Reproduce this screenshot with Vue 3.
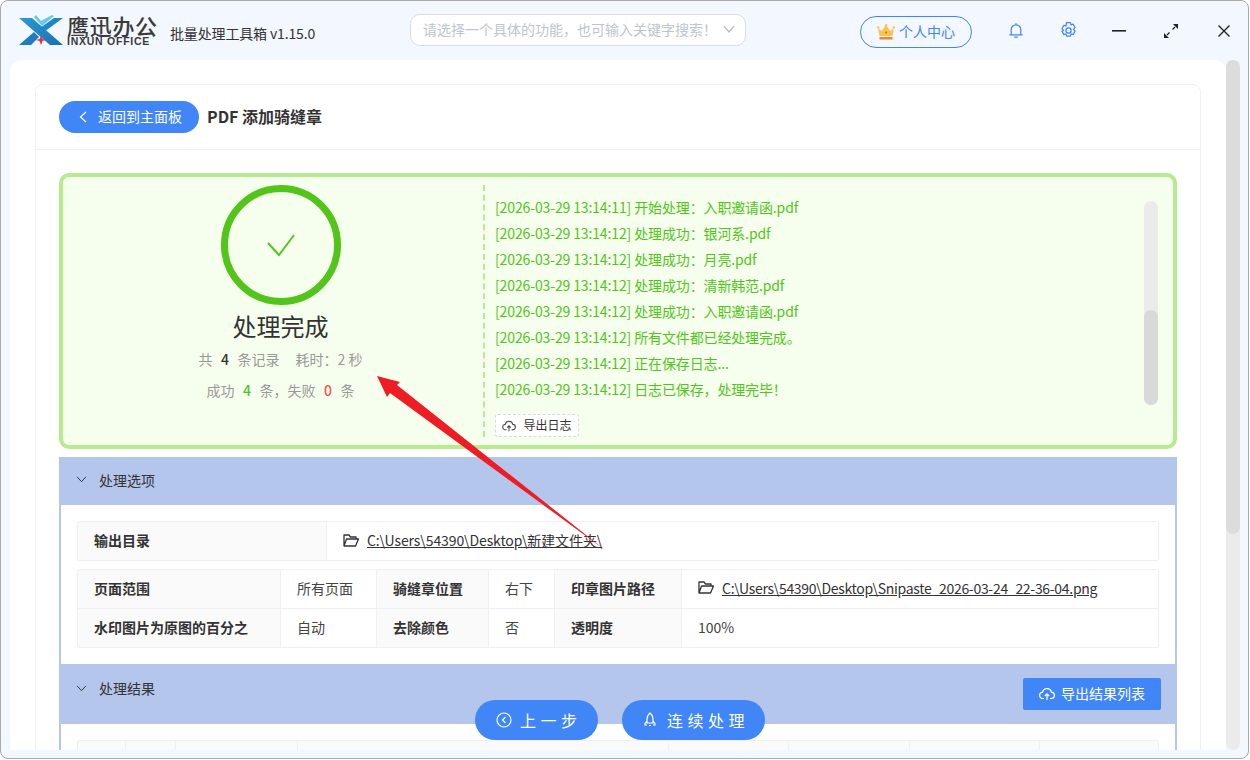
<script setup>
const logs = [
  '[2026-03-29 13:14:11] 开始处理：入职邀请函.pdf',
  '[2026-03-29 13:14:12] 处理成功：银河系.pdf',
  '[2026-03-29 13:14:12] 处理成功：月亮.pdf',
  '[2026-03-29 13:14:12] 处理成功：清新韩范.pdf',
  '[2026-03-29 13:14:12] 处理成功：入职邀请函.pdf',
  '[2026-03-29 13:14:12] 所有文件都已经处理完成。',
  '[2026-03-29 13:14:12] 正在保存日志...',
  '[2026-03-29 13:14:12] 日志已保存，处理完毕！'
]
</script>

<template>
  <div class="window">
    <header class="topbar">
      <div class="logo">
        <svg class="logo-mark" viewBox="0 0 46 33" width="46" height="33">
          <defs>
            <linearGradient id="lg1" x1="0" y1="0" x2="1" y2="1">
              <stop offset="0" stop-color="#2a9ad6" />
              <stop offset="1" stop-color="#1a6fae" />
            </linearGradient>
          </defs>
          <polygon points="1,4 14,4 45,31 32,31" fill="url(#lg1)" />
          <polygon points="45,4 36,4 22,14 26,18" fill="#1f86c6" />
          <polygon points="1,31 13,31 21,23 16,18" fill="#1f7dbd" />
          <polygon points="18,1 23,7 34,1 36,2 24,12 16,3" fill="#63c9ee" />
          <polygon points="23,22 24.500,25 28,26 24.500,27 23,31 21.500,27 18,26 21.500,25" fill="#e8303a" />
        </svg>
        <div class="logo-words">
          <span class="logo-cn">鹰迅办公</span>
          <span class="logo-en">INXUN OFFICE</span>
        </div>
      </div>
      <div class="app-name">批量处理工具箱 v1.15.0</div>
      <div class="search">
        <span>请选择一个具体的功能，也可输入关键字搜索！</span>
        <svg viewBox="0 0 12 8" width="12" height="8"><path d="M1 1l5 6 5-6" fill="none" stroke="#bbb" stroke-width="1.2" /></svg>
      </div>
      <div class="user">
        <svg viewBox="0 0 18 16" width="18" height="16">
          <path d="M1 4l3.5 3L9 1l4.5 6L17 4l-1.5 8h-13z" fill="#fcc252" />
          <circle cx="1.2" cy="3.4" r="1.2" fill="#fcc252" /><circle cx="9" cy="1.2" r="1.2" fill="#fcc252" /><circle cx="16.8" cy="3.4" r="1.2" fill="#fcc252" />
          <rect x="2.5" y="13" width="13" height="2.5" fill="#f5812a" />
          <circle cx="9" cy="8.5" r="1" fill="#e8503a" />
        </svg>
        <span>个人中心</span>
      </div>
      <svg class="tool bell" viewBox="0 0 16 18" width="14" height="17" fill="none" stroke="#4086f7" stroke-width="1.4">
        <path d="M2.5 14V8a5.5 5.5 0 0 1 11 0v6zM1 14h14M6.5 16.5h3M8 1v1.5" stroke-linecap="round" />
      </svg>
      <svg class="tool gear" viewBox="1.500 0.500 13 15" width="15" height="17" fill="none" stroke="#4086f7" stroke-width="1.100">
        <path d="M6.300 1h3.400l.5 2 1.900-.6 1.700 3-1.400 1.600 1.400 1.600-1.700 3-1.900-.6-.5 2H6.300l-.5-2-1.900.6-1.700-3L3.600 8 2.200 6.400l1.700-3 1.900.6z" stroke-linejoin="round" />
        <circle cx="8" cy="8" r="2.300" />
      </svg>
      <svg class="tool minus" viewBox="0 0 14 2" width="14" height="2"><rect width="14" height="1.6" fill="#222" /></svg>
      <svg class="tool expand" viewBox="0 0 14 14" width="14" height="14">
        <path d="M9 0h5v5zM0 14V9l5 5z" fill="#222" />
        <path d="M11 3L8.500 5.500M3 11l2.500-2.500" stroke="#222" stroke-width="1.300" />
      </svg>
      <svg class="tool close" viewBox="0 0 12 12" width="12" height="12"><path d="M.5.500l11 11M11.500.500l-11 11" stroke="#222" stroke-width="1.400" /></svg>
    </header>

    <div class="body">
      <main class="panel">
        <section class="card">
          <div class="card-head">
            <button class="back">
              <svg viewBox="0 0 8 12" width="8" height="12"><path d="M7 1L1.500 6 7 11" fill="none" stroke="#fff" stroke-width="1.200" /></svg>
              <span>返回到主面板</span>
            </button>
            <h1>PDF 添加骑缝章</h1>
          </div>

          <div class="card-body">
            <div class="result">
              <div class="summary">
                <svg class="ring" viewBox="0 0 120 120" width="120" height="120">
                  <circle cx="60" cy="60" r="56.500" fill="none" stroke="#52c41a" stroke-width="7" />
                  <path d="M47 58l11 12 15-20" fill="none" stroke="#52c41a" stroke-width="2" />
                </svg>
                <div class="done">处理完成</div>
                <div class="stat line1">共<b>4</b>条记录<span class="spent">耗时：2 秒</span></div>
                <div class="stat line2">成功<b class="ok">4</b>条，失败<b class="bad">0</b>条</div>
              </div>
              <div class="logbox">
                <div class="logs">
                  <div v-for="(l, i) in logs" :key="i" class="log">{{ l }}</div>
                </div>
                <button class="export-log">
                  <svg viewBox="0 0 16 14" width="14" height="12" fill="none" stroke="#444" stroke-width="1.200">
                    <path d="M5 11.500H4a3.200 3.200 0 0 1-.4-6.400 4.500 4.500 0 0 1 8.800 0 3.200 3.200 0 0 1-.4 6.400h-1M8 13V7M5.800 9L8 6.800 10.200 9" />
                  </svg>
                  <span>导出日志</span>
                </button>
                <div class="log-scroll"><div class="log-thumb"></div></div>
              </div>
            </div>

            <div class="sec-head first">
              <svg viewBox="0 0 12 8" width="11" height="7"><path d="M1 1l5 5.500L11 1" fill="none" stroke="#333" stroke-width="1.100" /></svg>
              <span>处理选项</span>
            </div>
            <div class="sec-body">
              <div class="grid one">
                <div class="cell label">输出目录</div>
                <div class="cell">
                  <svg class="folder" viewBox="0 0 16 13" width="16" height="13" fill="none" stroke="#333" stroke-width="1.300"><path d="M1 12V1h5l1.500 2H13v2M1 12h11.500L15.500 5H3.500z" stroke-linejoin="round" /></svg>
                  <a class="path-a">C:\Users\54390\Desktop\新建文件夹\</a>
                </div>
              </div>
              <div class="grid six">
                <div class="cell label">页面范围</div>
                <div class="cell">所有页面</div>
                <div class="cell label">骑缝章位置</div>
                <div class="cell">右下</div>
                <div class="cell label">印章图片路径</div>
                <div class="cell">
                  <svg class="folder" viewBox="0 0 16 13" width="16" height="13" fill="none" stroke="#333" stroke-width="1.300"><path d="M1 12V1h5l1.500 2H13v2M1 12h11.500L15.500 5H3.500z" stroke-linejoin="round" /></svg>
                  <a class="path-b">C:\Users\54390\Desktop\Snipaste_2026-03-24_22-36-04.png</a>
                </div>
                <div class="cell label nob">水印图片为原图的百分之</div>
                <div class="cell nob">自动</div>
                <div class="cell label nob">去除颜色</div>
                <div class="cell nob">否</div>
                <div class="cell label nob">透明度</div>
                <div class="cell nob">100%</div>
              </div>
            </div>

            <div class="sec-head second">
              <svg viewBox="0 0 12 8" width="11" height="7"><path d="M1 1l5 5.500L11 1" fill="none" stroke="#333" stroke-width="1.100" /></svg>
              <span>处理结果</span>
              <button class="export-list">
                <svg viewBox="0 0 16 14" width="16" height="14" fill="none" stroke="#fff" stroke-width="1.200">
                  <path d="M5 11.500H4a3.200 3.200 0 0 1-.4-6.400 4.500 4.500 0 0 1 8.800 0 3.200 3.200 0 0 1-.4 6.400h-1M8 13V7M5.800 9L8 6.800 10.200 9" />
                </svg>
                <span>导出结果列表</span>
              </button>
            </div>
            <div class="sec-body last">
              <div class="grid result-head">
                <div v-for="n in 8" :key="n" class="cell label"></div>
              </div>
            </div>
          </div>
        </section>
      </main>
      <div class="page-scroll"><div class="page-thumb"></div></div>
    </div>

    <div class="float-actions">
      <button class="pill prev">
        <svg viewBox="0 0 16 16" width="16" height="16" fill="none" stroke="#fff" stroke-width="1.200">
          <circle cx="8" cy="8" r="7" /><path d="M9.500 5L6.500 8l3 3" />
        </svg>
        <span>上一步</span>
      </button>
      <button class="pill next">
        <svg viewBox="0 0 14 16" width="14" height="16" fill="none" stroke="#fff" stroke-width="1.200">
          <path d="M7 1c2.500 2 3 4 3 6.500V11H4V7.500C4 5 4.500 3 7 1zM4 9l-2 2.500V13h2M10 9l2 2.500V13h-2M6 13.500h2" />
        </svg>
        <span>连续处理</span>
      </button>
    </div>

    <svg class="annot" viewBox="0 0 1250 760" width="1250" height="760">
      <polygon points="377,376 400,382 397,385 605,550 390,393 387,397" fill="#ee1c25" />
    </svg>
  </div>
</template>

<style>
html, body { margin: 0; background: #fff; }
</style>

<style scoped>
.window {
  position: relative;
  width: 1249px;
  height: 759px;
  box-sizing: border-box;
  border: 1px solid #aaa;
  border-radius: 8px;
  background: #f3f7ff;
  overflow: hidden;
  display: flex;
  flex-direction: column;
  font-family: "Noto Sans CJK SC", "Noto Sans", sans-serif;
  font-size: 14px;
  color: #333;
}
button { font-family: inherit; border: 0; padding: 0; cursor: pointer; }

.topbar {
  height: 59px;
  flex: none;
  display: flex;
  align-items: center;
  position: relative;
}
.logo { display: flex; align-items: flex-start; margin-left: 17px; width: 152px; }
.logo-mark { margin-top: 0; }
.logo-words { display: flex; flex-direction: column; margin-left: 3px; }
.logo-cn { font-size: 22px; font-weight: 500; line-height: 22px; letter-spacing: 0.700px; color: #3a3a3a; white-space: nowrap; }
.logo-en { font-size: 10.500px; font-weight: 700; line-height: 11px; letter-spacing: 0.750px; color: #3a3a3a; white-space: nowrap; font-family: "Liberation Sans", sans-serif; }
.app-name { width: 240px; font-size: 14px; line-height: 20px; margin-top: 4px; letter-spacing: -0.150px; white-space: nowrap; color: #333; }
.search {
  width: 336px;
  height: 32px;
  box-sizing: border-box;
  background: #fff;
  border: 1px solid #d9dce3;
  border-radius: 10px;
  display: flex;
  align-items: center;
  justify-content: space-between;
  padding: 0 10px 2px 12px;
  color: #c0c4cc;
  margin-bottom: 1px;
}
.user {
  margin-left: 114px;
  width: 112px;
  height: 32px;
  box-sizing: border-box;
  border: 1px solid #4086f7;
  border-radius: 16px;
  display: flex;
  align-items: center;
  justify-content: center;
  gap: 4px;
  color: #4086f7;
  margin-top: 3px;
}
.user span { margin-top: -2px; }
.tool { flex: none; }
.bell { margin-left: 37px; }
.gear { margin-left: 38px; }
.minus { margin-left: 36px; }
.expand { margin-left: 38px; }
.close { margin-left: 40px; }

.body {
  flex: 1;
  min-height: 0;
  display: flex;
  margin: 0 8px 8px 9px;
}
.panel {
  flex: 1;
  min-width: 0;
  background: #fff;
  border-radius: 12px 12px 0 0;
  padding: 24px 25px 0;
  overflow: hidden;
}
.page-scroll { width: 14px; flex: none; background: #ebebeb; border-radius: 7px; }
.page-thumb { height: 474px; background: #dcdcdc; border-radius: 7px; }

.card {
  border: 1px solid #f0f0f0;
  border-radius: 8px 8px 0 0;
  box-sizing: border-box;
  background: #fff;
}
.card-head {
  height: 65px;
  box-sizing: border-box;
  border-bottom: 1px solid #f0f0f0;
  display: flex;
  align-items: center;
  padding: 0 23px;
}
.back {
  width: 140px;
  height: 32px;
  border-radius: 16px;
  background: #4086f7;
  color: #fff;
  font-size: 14px;
  display: flex;
  align-items: center;
  padding-left: 20px;
  box-sizing: border-box;
  gap: 11px;
}
.back span { margin-top: -2px; }
.card-head h1 { font-size: 16px; font-weight: 700; margin: 0 0 2px 8px; color: #333; }
.card-body { padding: 23px 23px 0; }

.result {
  height: 276px;
  box-sizing: border-box;
  border: 4px solid #b7eb8f;
  border-radius: 10px;
  background: #f6ffed;
  display: flex;
  padding: 8px 0;
}
.summary {
  width: 420px;
  padding-left: 15px;
  box-sizing: border-box;
  display: flex;
  flex-direction: column;
  align-items: center;
}
.done { font-size: 24px; line-height: 34px; margin-top: 4px; color: #333; }
.stat { font-size: 14px; color: #999; line-height: 18px; white-space: nowrap; }
.stat b { font-weight: 500; color: #333; margin: 0 8.500px; }
.line1 { margin-top: 7px; }
.line2 { margin-top: 13px; }
.stat b.ok { color: #52c41a; }
.stat b.bad { color: #ff4d4f; }
.spent { margin-left: 16px; }

.logbox {
  position: relative;
  flex: 1;
  border-left: 2px dashed #b7eb8f;
  padding: 9px 0 0 10px;
}
.log { height: 26px; line-height: 26px; font-size: 14px; letter-spacing: -0.130px; color: #52c41a; white-space: nowrap; }
.export-log {
  margin-top: 12px;
  width: 84px;
  height: 23px;
  box-sizing: border-box;
  border: 1px dashed #d9d9d9;
  border-radius: 3px;
  background: #fff;
  color: #333;
  font-size: 12px;
  display: flex;
  align-items: center;
  justify-content: center;
  gap: 7px;
}
.export-log span { margin-top: -2px; }
.log-scroll {
  position: absolute;
  right: 15px;
  top: 16px;
  width: 14px;
  height: 204px;
  background: #ebebeb;
  border-radius: 7px;
}
.log-thumb {
  position: absolute;
  left: 0;
  bottom: 0;
  width: 14px;
  height: 95px;
  background: #d9d9d9;
  border-radius: 7px;
}

.sec-head {
  background: #b5c6ec;
  display: flex;
  align-items: center;
  box-sizing: border-box;
  padding: 0 16px 0 17px;
  color: #333;
  font-size: 14px;
}
.sec-head > span { margin-left: 12px; }
.sec-head.first { height: 48px; margin-top: 8px; padding-bottom: 3px; }
.sec-head.second { height: 60px; padding-bottom: 12px; }
.sec-body {
  border-left: 2px solid #b5c6ec;
  border-right: 2px solid #b5c6ec;
  padding: 16px;
}
.sec-body.last { padding-bottom: 0; }

.grid {
  display: grid;
  border: 1px solid #f0f0f0;
  box-sizing: border-box;
  font-size: 14px;
  border-radius: 2px;
}
.grid.one { grid-template-columns: 249px 1fr; height: 40px; margin-bottom: 8px; }
.grid.six { grid-template-columns: 203px 96px 112px 66px 127px 1fr; grid-template-rows: 38.500px 38.500px; }
.grid.result-head { grid-template-columns: 48px 50px 122px 371px 120px 121px 130px 1fr; height: 40px; }
.cell {
  display: flex;
  align-items: center;
  padding: 0 16px 2px;
  border-right: 1px solid #f0f0f0;
  border-bottom: 1px solid #f0f0f0;
  white-space: nowrap;
  color: #444;
  min-width: 0;
}
.grid.six .cell:nth-child(6), .grid.six .cell:last-child, .grid.one .cell:last-child, .result-head .cell:last-child { border-right: 0; }
.cell.nob { border-bottom: 0; }
.grid.one .cell { border-bottom: 0; }
.label { background: #fafafa; font-weight: 700; color: #333; }
.folder { flex: none; margin-right: 8px; }
a { text-decoration: underline; color: #333; }
.path-a { letter-spacing: -0.100px; }
.path-b { letter-spacing: -0.300px; }

.export-list {
  margin-left: auto;
  margin-top: 12px;
  width: 138px;
  height: 32px;
  background: #4086f7;
  color: #fff;
  border-radius: 2px;
  font-size: 14px;
  display: flex;
  align-items: center;
  justify-content: center;
  gap: 6px;
}
.export-list span { margin-top: -2px; }

.float-actions {
  position: absolute;
  left: 474px;
  top: 699px;
  display: flex;
  gap: 24px;
}
.pill {
  height: 40px;
  border-radius: 20px;
  background: #4086f7;
  color: #fff;
  font-size: 16px;
  letter-spacing: 4.500px;
  display: flex;
  align-items: center;
  box-sizing: border-box;
}
.pill span { margin-top: -1px; }
.prev { width: 123px; padding-left: 21px; gap: 8px; }
.next { width: 143px; padding-left: 21px; gap: 10px; }
.annot { position: absolute; left: -1px; top: -1px; pointer-events: none; }
</style>
